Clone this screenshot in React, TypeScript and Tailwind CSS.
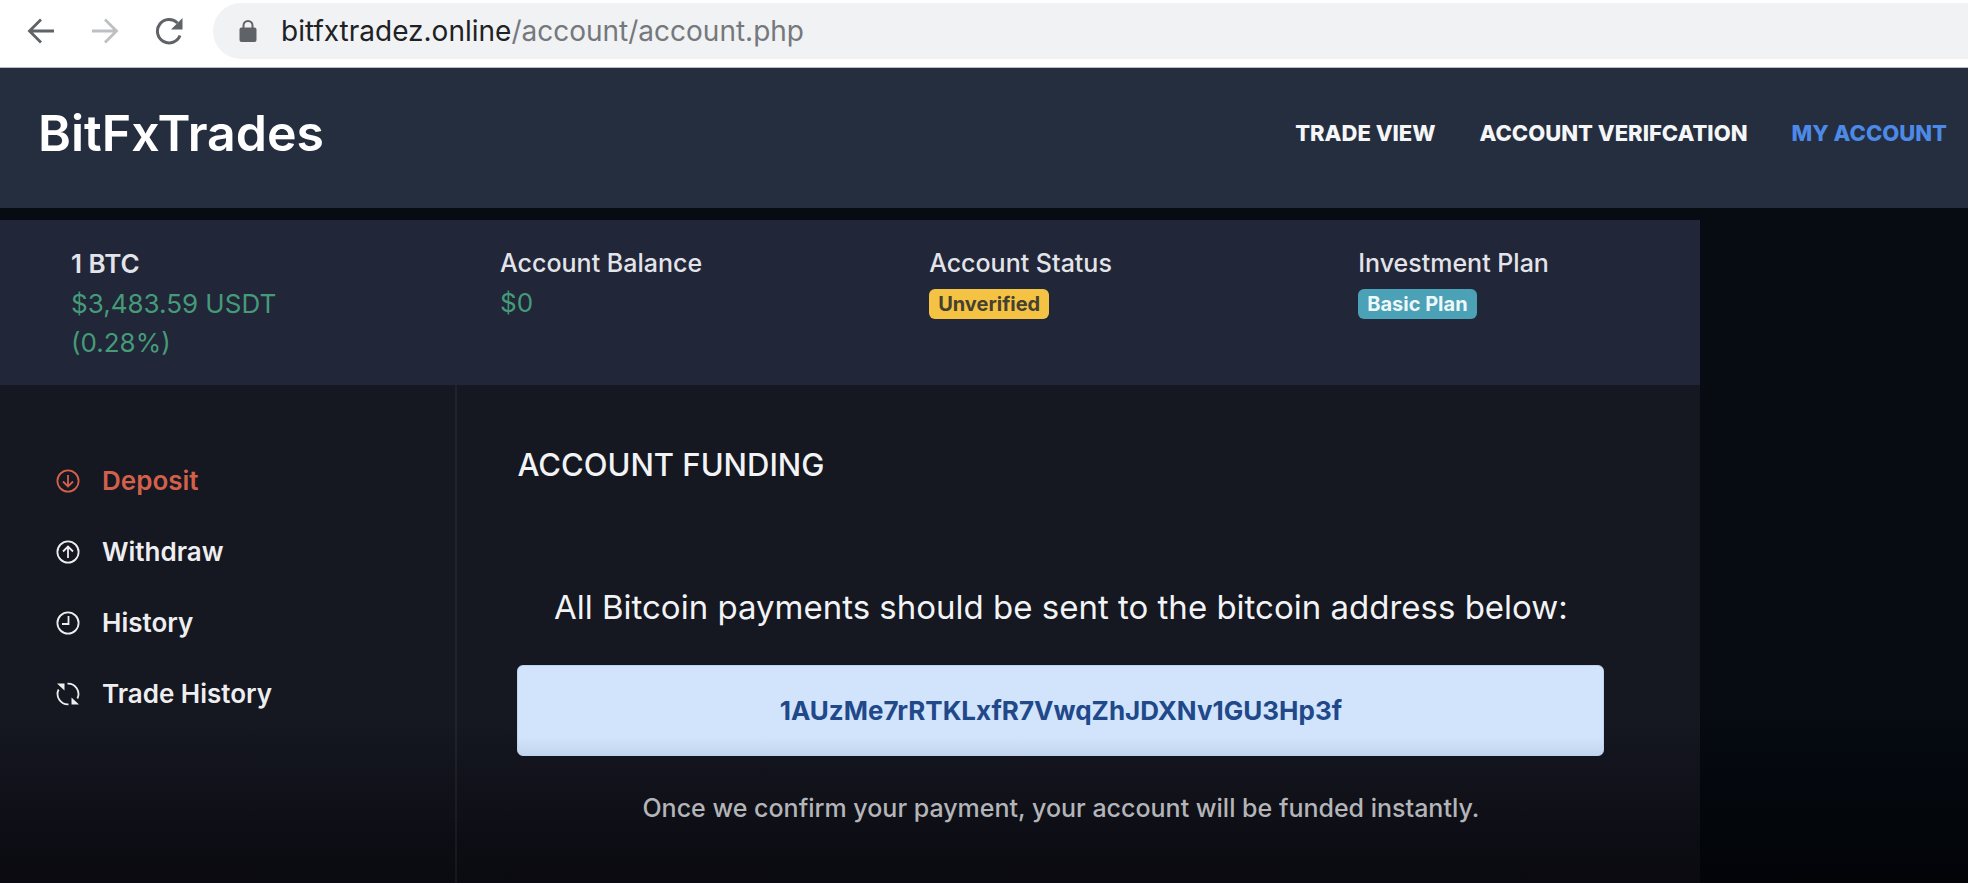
import type { ReactNode } from "react";

const NAV_LINKS = [
  { label: "TRADE VIEW", active: false },
  { label: "ACCOUNT VERIFCATION", active: false },
  { label: "MY ACCOUNT", active: true },
];

function BackIcon() {
  return (
    <svg viewBox="0 0 28 28" className="size-7" fill="none" stroke="currentColor" strokeWidth="2.8" aria-hidden>
      <path d="M27 14H3M14 2.5 2.5 14 14 25.5" />
    </svg>
  );
}

function ReloadIcon() {
  return (
    <svg viewBox="0 0 28 28" className="size-7" aria-hidden>
      <path d="M25 18.5A11.7 11.7 0 1 1 22.5 6" fill="none" stroke="currentColor" strokeWidth="3" />
      <path d="M27.5 1v11.5H16z" fill="currentColor" />
    </svg>
  );
}

function LockIcon() {
  return (
    <svg viewBox="0 0 18 24" className="h-6 w-[18px] shrink-0 text-[#5f6368]" aria-hidden>
      <rect x="0.5" y="8.5" width="17" height="14.5" rx="2" fill="currentColor" />
      <path d="M4.5 9.5V6.5a4.5 4.5 0 0 1 9 0v3" fill="none" stroke="currentColor" strokeWidth="2" />
    </svg>
  );
}

function MenuIcon({ children }: { children: ReactNode }) {
  return (
    <svg viewBox="0 0 24 24" className="size-6 shrink-0" fill="none" stroke="currentColor" strokeWidth="1.8" aria-hidden>
      {children}
    </svg>
  );
}

const MENU = [
  {
    label: "Deposit",
    active: true,
    icon: (
      <>
        <circle cx="12" cy="12" r="10.6" />
        <path d="M12 6v11M7 12.5l5 5 5-5" />
      </>
    ),
  },
  {
    label: "Withdraw",
    active: false,
    icon: (
      <>
        <circle cx="12" cy="12" r="10.6" />
        <path d="M12 18V7M7 11.5l5-5 5 5" />
      </>
    ),
  },
  {
    label: "History",
    active: false,
    icon: (
      <>
        <circle cx="12" cy="12" r="10.6" />
        <path d="M12.5 5v8H6" />
      </>
    ),
  },
  {
    label: "Trade History",
    active: false,
    icon: (
      <>
        <path d="M11.5 1.6A10.4 10.4 0 0 1 21.4 16.5M12.5 22.4A10.4 10.4 0 0 1 2.6 7.5" />
        <path d="M1 1.5h7.5v7zM23 22.5h-7.5v-7z" fill="currentColor" stroke="none" />
      </>
    ),
  },
];

function Stat({ label, children }: { label: ReactNode; children: ReactNode }) {
  return (
    <div className="min-w-0 leading-[39px]">
      <div className="text-[25px] font-medium text-[#e3e4e9]">{label}</div>
      {children}
    </div>
  );
}

export default function App() {
  return (
    <div className="flex min-h-screen flex-col bg-linear-to-b from-[#060c12] from-80% to-[#020408] font-['Inter','Liberation_Sans',sans-serif]">
      <div className="flex h-[68px] items-center border-b border-[#b9bcc1] bg-white pb-1.5 pl-[27px] text-[#5f6368]">
        <button type="button" aria-label="Back">
          <BackIcon />
        </button>
        <button type="button" aria-label="Forward" disabled className="ml-9 rotate-180 text-[#bdbfc2]">
          <BackIcon />
        </button>
        <button type="button" aria-label="Reload" className="ml-9">
          <ReloadIcon />
        </button>
        <div className="ml-[30px] flex h-14 flex-1 items-center rounded-l-full bg-[#f0f2f4] pl-[26px] text-[28px]">
          <LockIcon />
          <span className="ml-6 text-[#75787c]">
            <span className="text-[#202124]">bitfxtradez.online</span>/account/account.php
          </span>
        </div>
      </div>

      <header className="flex h-[140px] items-center justify-between bg-[#252e3e] pr-[21px] pb-2.5 pl-[38px]">
        <a href="#" className="text-[50px] font-semibold text-white">
          BitFxTrades
        </a>
        <nav className="flex gap-11 text-[22px] font-extrabold">
          {NAV_LINKS.map((link) => (
            <a key={link.label} href="#" className={link.active ? "text-[#4d8ae8]" : "text-[#f5f6f8]"}>
              {link.label}
            </a>
          ))}
        </nav>
      </header>

      <div className="mt-3 flex w-[86.4%] flex-1 flex-col">
        <section className="grid h-[165px] grid-cols-[1fr_1fr_1fr_21%] bg-[#212638] pt-6 pl-[71px]">
          <Stat label={<span className="text-[26px] font-semibold">1 BTC</span>}>
            <div className="text-[26px] text-[#459b78]">
              $3,483.59 USDT
              <br />
              (0.28%)
            </div>
          </Stat>
          <Stat label="Account Balance">
            <div className="text-[26px] text-[#459b78]">$0</div>
          </Stat>
          <Stat label="Account Status">
            <span className="mt-1.5 flex h-[30px] w-fit items-center rounded-md bg-[#f5c344] px-[9px] text-[20px] font-bold text-[#45402f]">
              Unverified
            </span>
          </Stat>
          <Stat label="Investment Plan">
            <span className="mt-1.5 flex h-[30px] w-fit items-center rounded-md bg-[#4ba1b6] px-[9px] text-[20px] font-bold text-[#eef7fa]">
              Basic Plan
            </span>
          </Stat>
        </section>

        <div className="flex flex-1 bg-linear-to-b from-[#151721] from-68% to-[#0a0a10]">
          <aside className="w-[26.9%] border-r-2 border-white/5 pt-[76px] pl-14">
            <ul className="flex flex-col gap-8 text-[26px] leading-[39px] font-semibold">
              {MENU.map((item) => (
                <li key={item.label}>
                  <a
                    href="#"
                    className={`flex items-center gap-[22px] ${item.active ? "text-[#d2604b]" : "text-[#eeeef0]"}`}
                  >
                    <MenuIcon>{item.icon}</MenuIcon>
                    {item.label}
                  </a>
                </li>
              ))}
            </ul>
          </aside>

          <main className="flex flex-1 flex-col pt-[60px] pr-24 pl-[60px] text-[#f2f3f5]">
            <h1 className="text-[31px] leading-10 font-medium">ACCOUNT FUNDING</h1>
            <h2 className="mt-[100px] text-center text-[33px] leading-[44px]">
              All Bitcoin payments should be sent to the bitcoin address below:
            </h2>
            <div className="mt-9 flex h-[91px] items-center justify-center rounded-md border border-[#bcd3f0] bg-linear-to-b from-[#d1e4fc] from-80% to-[#c3d5ec] text-[26px] font-bold text-[#214889]">
              1AUzMe7rRTKLxfR7VwqZhJDXNv1GU3Hp3f
            </div>
            <p className="mt-8 text-center text-[25px] leading-10 font-medium text-[#b4b5b8]">
              Once we confirm your payment, your account will be funded instantly.
            </p>
          </main>
        </div>
      </div>
    </div>
  );
}
